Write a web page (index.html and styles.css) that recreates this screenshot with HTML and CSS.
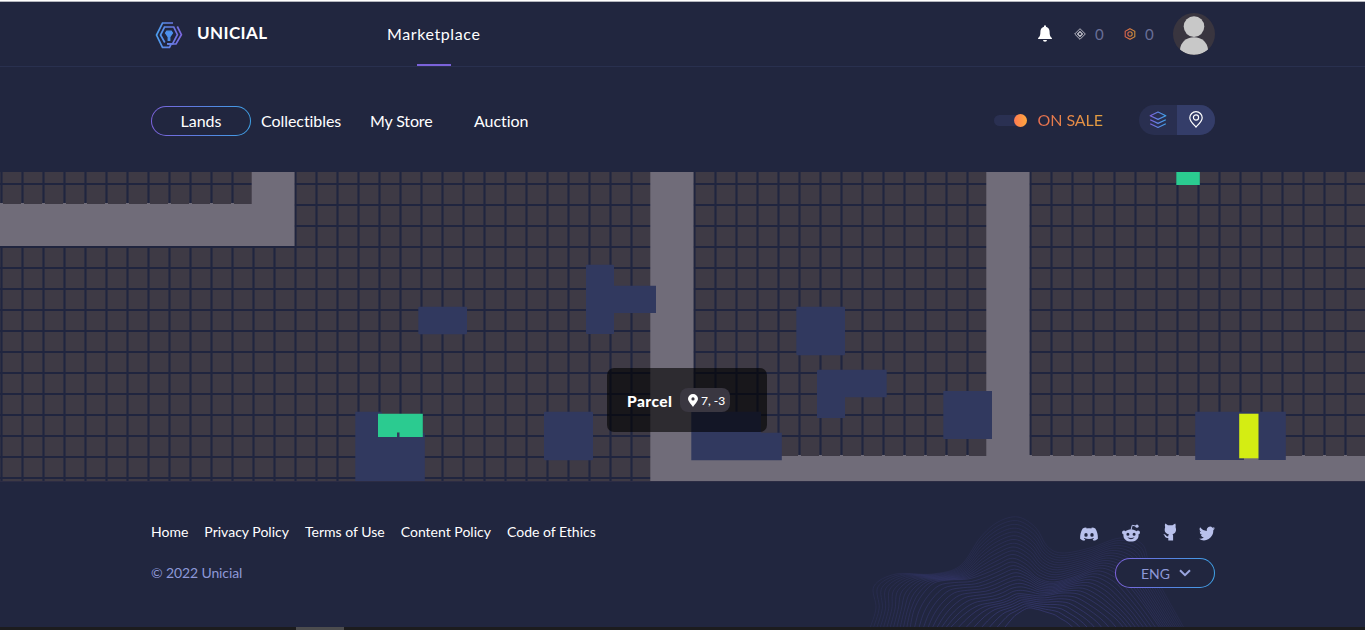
FILE: index.html
```html
<!DOCTYPE html>
<html lang="en">
<head>
<meta charset="utf-8">
<title>Unicial Marketplace</title>
<link rel="stylesheet" href="styles.css">
</head>
<body>
<svg class="defs" width="0" height="0" aria-hidden="true">
  <defs>
    <linearGradient id="brand" gradientUnits="userSpaceOnUse" x1="0" y1="0" x2="28" y2="0"><stop offset="0" stop-color="#48a0ee"/><stop offset="1" stop-color="#7d63dd"/></linearGradient>
    <linearGradient id="brand2" x1="0" y1="0" x2="1" y2="0"><stop offset="0" stop-color="#7d63dd"/><stop offset="1" stop-color="#3fa2e8"/></linearGradient>
    <linearGradient id="warm" x1="0" y1="0" x2="1" y2="0"><stop offset="0" stop-color="#d8624b"/><stop offset="1" stop-color="#d08e3a"/></linearGradient>
  </defs>
</svg>
<div class="page">
  <header class="header">
    <div class="wrap header-row">
      <a class="logo">
        <svg class="logo-mark" width="28" height="28" viewBox="0 0 28 28" fill="none" stroke="url(#brand)" stroke-width="1.700">
          <path d="M18 2H7.500L1.500 14L7.500 26.300H14.500L16 23.300"/>
          <path d="M22.300 5.500L26.400 13.700L21 23H12.500"/>
          <path d="M12 22.800L17.500 22.800L22.400 13.700L18.700 6H9.500L5.500 14L9.800 21.500"/>
          <path d="M10.500 12L11.800 10.200H16.200L17.500 12L14.800 16V19.300H13.200V16Z" fill="#4e92ee" stroke="#4e92ee" stroke-width="1.200"/>
        </svg>
        <span class="logo-text">UNICIAL</span>
      </a>
      <a class="main-link">Marketplace</a>
      <div class="account">
        <svg class="bell" width="14" height="17" viewBox="0 0 14 17" fill="#fff"><path d="M7 .3a1 1 0 0 1 1 1v.5c2.3.5 3.6 2.4 3.6 5 0 3.6.6 5 2.3 6.2v1H.1v-1C1.8 11.800 2.400 10.400 2.400 6.800c0-2.600 1.300-4.500 3.600-5v-.5a1 1 0 0 1 1-1zM5 15h4a2 1.700 0 0 1-4 0z"/></svg>
        <svg class="coin-a" width="12" height="12" viewBox="0 0 12 12" fill="none" stroke="#c9c9d2" stroke-width=".9"><path d="M6 .7L11.300 6 6 11.300.7 6z"/><path d="M6 3.600L8.400 6 6 8.400 3.600 6z" stroke-width="1.200"/></svg>
        <span class="amount">0</span>
        <svg class="coin-b" width="12" height="12" viewBox="0 0 12 12" fill="none" stroke="url(#warm)" stroke-width="1.100"><path d="M6 .7L10.800 3.300V8.700L6 11.300 1.200 8.700V3.300z"/><circle cx="6" cy="6" r="2.200"/></svg>
        <span class="amount">0</span>
        <svg class="avatar" width="42" height="42" viewBox="0 0 42 42"><clipPath id="av"><circle cx="21" cy="21" r="21"/></clipPath><g clip-path="url(#av)"><rect width="42" height="42" fill="#39353f"/><circle cx="21" cy="13.600" r="10.300" fill="#c8c8c8"/><path d="M6.900 37C7.500 29.500 13 24.300 21 24.300S34.500 29.500 35.100 37C31 40 26 41.700 21 41.700S11 40 6.900 37z" fill="#c8c8c8"/></g></svg>
      </div>
    </div>
  </header>

  <nav class="wrap subnav">
    <a class="pill tab-active">Lands</a>
    <a class="tab collectibles">Collectibles</a>
    <a class="tab store">My Store</a>
    <a class="tab auction">Auction</a>
    <div class="filters">
      <span class="toggle"><span class="knob"></span></span>
      <span class="sale">ON SALE</span>
      <div class="views">
        <span class="view"><svg width="18" height="18" viewBox="0 0 18 18" fill="none" stroke="url(#brand2)" stroke-width="1.200" stroke-linejoin="round"><path d="M9 1L16.800 4.700 9 8.400 1.200 4.700z"/><path d="M1.200 8.700L9 12.400l7.800-3.700M1.200 12.800L9 16.500l7.800-3.700"/></svg></span>
        <span class="view on"><svg width="14" height="17" viewBox="0 0 14 17" fill="none" stroke="#fff" stroke-width="1.200"><path d="M7 16C4.700 13.500.8 10.200.8 6.700a6.200 6 0 0 1 12.400 0C13.200 10.200 9.300 13.500 7 16z"/><circle cx="7" cy="6.500" r="2.600"/></svg></span>
      </div>
    </div>
  </nav>

  <main class="map">
    <svg class="tiles" width="1365" height="310" viewBox="0 172 1365 310">
      <defs>
        <pattern id="grid" width="21" height="21" x="0" y="183" patternUnits="userSpaceOnUse">
          <rect width="21" height="21" fill="#3e3a45"/>
          <rect x=".4" width="2.200" height="21" fill="#20253f"/>
          <rect width="21" height="2" fill="#20253f"/>
        </pattern>
      </defs>
      <rect y="172" width="1365" height="309" fill="url(#grid)"/>
      <rect y="481" width="1365" height="1" fill="#2c2c44"/>
      <g fill="#706c79">
        <path d="M0 204H251.700V172H294.500V246H0z"/>
        <path d="M650.300 172H693.500V456H986.300V172H1029.500V456H1365V481H650.300z"/>
      </g>
      <path d="M0 203.500H251M693 455.500H986M1029 455.500H1365" stroke="#706c79" stroke-dasharray="3 18" fill="none"/>
      <g fill="#31395f">
        <rect x="418.300" y="306.700" width="48.700" height="27.600" rx="1"/>
        <path d="M587 264.700h26q1 0 1 1v20h42v27.300h-42v21h-27q-1 0-1-1v-67.300q0-1 1-1z"/>
        <rect x="796.300" y="306.700" width="48.700" height="48.600" rx="1"/>
        <path d="M818 369.700h68.700v27.500H845V418h-28v-47.300z"/>
        <rect x="544" y="411.700" width="49" height="48.500" rx="1"/>
        <path d="M355.300 411.700H382V433h42.800v48H355.300z"/>
        <path d="M691.300 411.700H761V432.700h20.800v27.500H691.300z"/>
        <rect x="943.300" y="391" width="48.700" height="48"/>
        <path d="M1195.200 411.700H1285.800V460H1258.500v-2H1244v2h-48.800z"/>
      </g>
      <path d="M378 413.700H422.800V437H399.500v-4.500h-2.500V437H378z" fill="#2bcb90"/>
      <rect x="1176.300" y="172" width="23.500" height="13" fill="#2bcb90"/>
      <rect x="1239.200" y="413.700" width="19.300" height="44.600" fill="#d4ed13"/>
    </svg>
    <div class="tooltip">
      <b class="tip-title">Parcel</b>
      <span class="coord"><svg width="10" height="13" viewBox="0 0 10 13" fill="#fff"><path fill-rule="evenodd" d="M5 13C3.500 10.500 0 7.500 0 4.800a5 4.800 0 0 1 10 0C10 7.500 6.500 10.500 5 13zM5 3.300a1.600 1.600 0 1 0 0 3.200 1.600 1.600 0 0 0 0-3.200z"/></svg><span class="coord-text">7, -3</span></span>
    </div>
  </main>

  <footer class="footer">
    <svg class="waves" id="waves" width="360" height="127" viewBox="0 0 360 127" fill="none"></svg>
    <div class="wrap foot-row">
      <div class="foot-left">
        <div class="links"><a>Home</a><a>Privacy Policy</a><a>Terms of Use</a><a>Content Policy</a><a>Code of Ethics</a></div>
        <div class="copy">© 2022 Unicial</div>
      </div>
      <div class="foot-right">
        <div class="social">
          <svg width="18" height="18" viewBox="0 0 18 18"><path fill-rule="evenodd" d="M6.200 2.500c-1.400.1-2.600.5-3.500 1C.8 6.500 0 9.500.1 13.800c1.400 1.200 2.800 1.800 4.300 2l1-1.700c-.6-.2-1-.4-1.500-.7l.4-.3c3.200 1.300 6.200 1.300 9.400 0l.4.3-1.500.7 1 1.700c1.500-.2 2.900-.8 4.300-2 .1-4.300-.7-7.300-2.600-10.300-.9-.5-2.100-.9-3.500-1l-.5 1c-1.500-.2-3.100-.2-4.600 0zM6 8a1.700 1.900 0 1 1 0 3.800A1.700 1.900 0 0 1 6 8zm6 0a1.700 1.900 0 1 1 0 3.800A1.700 1.900 0 0 1 12 8z"/></svg>
          <svg class="reddit" width="18" height="18" viewBox="0 0 18 18"><path d="M9 6L10.200 1.300 14.500 2.200" fill="none" stroke="#b9c1ec" stroke-width="1"/><circle cx="15" cy="2.200" r="1.600"/><circle cx="2" cy="8.500" r="2"/><circle cx="16" cy="8.500" r="2"/><path fill-rule="evenodd" d="M9 5.500c4.500 0 7.600 2.500 7.600 5.900S13.500 17.600 9 17.600s-7.600-2.800-7.600-6.200S4.500 5.500 9 5.500zM5.900 8.700a1.500 1.500 0 1 0 0 3 1.500 1.500 0 0 0 0-3zm6.200 0a1.500 1.500 0 1 0 0 3 1.500 1.500 0 0 0 0-3zM5.400 13.200c1.900 2.600 5.300 2.600 7.200 0-2.100 1.100-5.100 1.100-7.200 0z"/></svg>
          <svg class="github" width="14" height="18" viewBox="0 0 14 18"><path d="M2.300.5L5 2.200h4.500L12.200.5C12.800 2 12.800 3 12.500 4c1.300 3.500.3 6.300-3 7.300.6.500.6 1.200.6 1.900v4.300H5.300v-2.600c-2.500.4-3.200-.8-3.600-1.900C1.300 12 .4 12 .6 11.300c1.500-.6 2 .6 2.700 1.500.5.700 1.300.8 2 .5 0-.9.1-1.500.7-2C1.800 10.500 1 7.600 2.200 4 1.800 3 1.700 2 2.300.5z"/></svg>
          <svg width="16" height="17" viewBox="0 0 24 24" preserveAspectRatio="none"><path d="M24 4.600a10 10 0 0 1-2.800.8 5 5 0 0 0 2.100-2.700 10 10 0 0 1-3.100 1.200 4.900 4.900 0 0 0-8.400 4.500A14 14 0 0 1 1.700 3.200a4.900 4.900 0 0 0 1.500 6.500 5 5 0 0 1-2.200-.6 4.900 4.900 0 0 0 3.900 4.900 5 5 0 0 1-2.200.1 4.900 4.900 0 0 0 4.600 3.400A10 10 0 0 1 0 19.500a14 14 0 0 0 21.500-12.400A10 10 0 0 0 24 4.600z"/></svg>
        </div>
        <div class="pill lang"><span>ENG</span><svg width="12" height="8" viewBox="0 0 12 8" fill="none" stroke="#9aa5e0" stroke-width="2"><path d="M1 1.200L6 6.200 11 1.200"/></svg></div>
      </div>
    </div>
  </footer>
  <div class="scrollbar"><span class="thumb"></span></div>
</div>
<script src="waves.js"></script>
</body>
</html>
```
FILE: styles.css
```css
* { box-sizing: border-box; }
body { margin: 0; background: #21263f; color: #fff; font-family: Lato, "Open Sans", sans-serif; font-variant-ligatures: none; overflow: hidden; }
.defs { position: absolute; }
.page { width: 1365px; height: 630px; display: flex; flex-direction: column; }
.wrap { width: 1064px; margin: 0 auto 0 151px; }
svg { display: block; flex: none; }
a, span { white-space: nowrap; }

.header { height: 67px; border-top: 1px solid #fff; border-bottom: 1px solid #29304f; box-shadow: inset 0 1px #b4b6be; flex: none; }
.header-row { display: flex; height: 65px; align-items: center; }
.logo { display: flex; align-items: center; padding-left: 4px; width: 236px; gap: 14px; }
.logo-mark { margin-top: 2px; }
.logo-text { font-size: 17px; font-weight: 700; line-height: 22px; letter-spacing: .4px; padding-bottom: 1px; }
.main-link { position: relative; font-size: 16px; line-height: 65px; letter-spacing: .6px; }
.main-link::after { content: ""; position: absolute; left: 30px; bottom: 0; width: 34px; height: 2px; background: #7b62da; }
.account { display: flex; align-items: center; margin-left: auto; }
.bell { margin-right: 1px; }
.coin-a { margin-left: 21px; }
.coin-b { margin-left: 21px; }
.amount { font-size: 15px; color: #696f98; margin-left: 9px; line-height: 20px; width: 8px; }
.avatar { margin-left: 20px; }

.subnav { display: flex; align-items: center; height: 105px; flex: none; padding-bottom: 1px; font-size: 16px; }
.pill { border: 1px solid transparent; border-radius: 15px; width: 100px; height: 30px; display: flex; align-items: center; justify-content: center; background: linear-gradient(#21263f, #21263f) padding-box, linear-gradient(90deg, #7d63dd, #5a7fe0 50%, #3fa2e8) border-box; }
.tab-active { margin-top: 4px; padding-bottom: 1px; }
.tab { margin-top: 2px; letter-spacing: -.06px; }
.collectibles { margin-left: 10px; width: 109px; }
.store { width: 104px; letter-spacing: -.15px; }
.filters { margin-left: auto; display: flex; align-items: center; margin-top: 1px; }
.toggle { width: 33px; height: 11px; border-radius: 6px; background: #2a3052; display: flex; align-items: center; justify-content: flex-end; margin-top: 1px; }
.knob { width: 13px; height: 13px; border-radius: 50%; flex: none; background: linear-gradient(90deg, #ff7a52, #ffa83e); }
.sale { margin-left: 10px; letter-spacing: -.04px; background: linear-gradient(90deg, #e96e50, #e3a040); -webkit-background-clip: text; background-clip: text; color: transparent; }
.views { display: flex; width: 76px; height: 30px; border-radius: 15px; overflow: hidden; margin-left: 36px; background: #292f50; }
.view { flex: 1; display: flex; align-items: center; justify-content: center; }
.on { background: #343d69; }

.map { position: relative; height: 310px; flex: none; }
.tooltip { position: absolute; left: 607px; top: 196px; width: 160px; height: 64px; border-radius: 7px; background: rgba(0, 0, 0, .6); display: flex; align-items: center; padding-left: 20px; }
.tip-title { font-size: 15.500px; font-weight: 900; padding-top: 2px; width: 53px; letter-spacing: .45px; }
.coord { display: flex; align-items: center; gap: 3px; width: 50px; height: 24px; padding-left: 8px; border-radius: 8px; background: #3a3741; font-size: 12px; font-weight: 500; }
.coord-text { padding-top: 1px; }

.footer { position: relative; height: 145px; flex: none; overflow: hidden; }
.waves { position: absolute; left: 862px; top: 18px; }
.foot-row { position: relative; display: flex; justify-content: space-between; }
.foot-left { padding-top: 41px; font-size: 14px; line-height: 18px; }
.links { display: flex; gap: 16px; letter-spacing: .01px; }
.copy { margin-top: 23px; color: #8d98d8; letter-spacing: -.12px; }
.foot-right { padding-top: 43px; width: 135px; }
.social { display: flex; justify-content: space-between; fill: #b9c1ec; }
.reddit { margin: -1px 0 1px 1px; }
.github { margin: -2px -1px 2px 1px; }
.lang { margin: 15px 0 0 35px; color: #8d98d8; font-size: 14px; gap: 9px; padding-left: 2px; }

.scrollbar { height: 3px; background: #1c1c1e; padding-left: 296px; }
.thumb { display: block; width: 48px; height: 3px; background: #4c4c4e; }
```
FILE: waves.js
```js
// Contour lines: each line is blended between neighbouring key curves.
const keys = [
  [[8,128],[14,108],[12,86],[34,74],[70,74],[98,66],[118,38],[136,22],[156,17],[174,28],[185,46],[200,53],[228,48],[258,38],[280,44],[288,66],[304,96],[322,128]],
  [[48,128],[52,110],[60,95],[72,83],[88,80],[106,79],[122,74],[136,68],[150,62],[164,68],[176,78],[192,82],[214,76],[238,68],[258,76],[272,92],[284,108],[298,128]],
  [[88,128],[98,118],[108,110],[118,105],[128,103],[138,101],[146,98],[154,94],[162,94],[170,95],[178,96],[188,95],[200,93],[216,94],[230,101],[243,110],[254,119],[262,128]],
  [[150,128],[153,124],[156,120],[158,117],[160,115],[162,113],[165,111],[168,110],[171,110],[174,111],[178,112],[182,114],[186,116],[190,118],[194,121],[198,123],[202,126],[204,128]]
];
const counts = [12, 9, 8];
let out = "", n = 0;
counts.forEach((count, k) => {
  for (let i = 0; i < count; i++, n++) {
    const t = i / count;
    const p = keys[k].map((a, j) => a.map((v, c) => v + (keys[k + 1][j][c] - v) * t));
    let d = `M${p[0]}`;
    for (let j = 0; j < p.length - 1; j++) {
      const a = p[Math.max(0, j - 1)], b = p[j], c = p[j + 1], e = p[Math.min(p.length - 1, j + 2)];
      d += `C${b[0] + (c[0] - a[0]) / 6} ${b[1] + (c[1] - a[1]) / 6} ${c[0] - (e[0] - b[0]) / 6} ${c[1] - (e[1] - b[1]) / 6} ${c[0]} ${c[1]}`;
    }
    out += `<path d="${d}" stroke="#42438a" stroke-width=".9" opacity="${(0.2 + n * 0.014).toFixed(3)}"/>`;
  }
});
document.getElementById("waves").innerHTML = out;
```
